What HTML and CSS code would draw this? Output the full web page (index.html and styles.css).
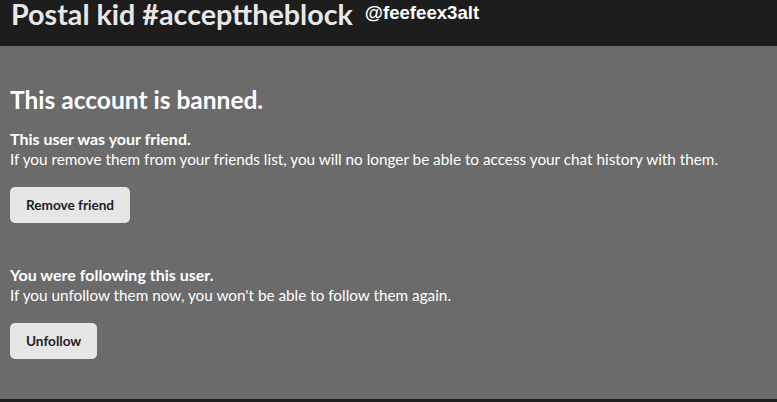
FILE: index.html
```html
<!DOCTYPE html>
<html>
<head>
<meta charset="utf-8">
<link rel="stylesheet" href="styles.css">
</head>
<body>
<header class="top">
  <h1 class="name">Postal kid #accepttheblock</h1>
  <span class="handle">@feefeex3alt</span>
</header>
<main class="content">
  <h2 class="banned">This account is banned.</h2>
  <section class="block">
    <h3 class="block-title">This user was your friend.</h3>
    <p class="block-text">If you remove them from your friends list, you will no longer be able to access your chat history with them.</p>
    <button class="btn">Remove friend</button>
  </section>
  <section class="block">
    <h3 class="block-title">You were following this user.</h3>
    <p class="block-text">If you unfollow them now, you won't be able to follow them again.</p>
    <button class="btn">Unfollow</button>
  </section>
</main>
<div class="bottom"></div>
</body>
</html>
```
FILE: styles.css
```css
html, body {
  margin: 0;
  padding: 0;
  height: 100%;
}
body {
  background: #1e1e1e;
  font-family: Lato, "Liberation Sans", sans-serif;
  color: #ffffff;
  display: flex;
  flex-direction: column;
  overflow: hidden;
}
.top {
  height: 46px;
  background: #1d1d1d;
  display: flex;
  align-items: flex-start;
  gap: 12px;
  padding: 0 11px;
  box-sizing: border-box;
}
.name {
  margin: 0;
  font-size: 28.7px;
  font-weight: 700;
  color: #e8e8e8;
  line-height: 1;
}
.handle {
  font-family: "Liberation Sans", Arial, sans-serif;
  font-weight: 700;
  font-size: 18.6px;
  color: #ffffff;
  line-height: 22px;
  margin-top: 2px;
}
.content {
  background: #6b6b6b;
  height: 353px;
  box-sizing: border-box;
  padding: 39px 10px 0;
}
.banned {
  margin: 0 0 14px;
  font-size: 24.5px;
  font-weight: 700;
  line-height: 30px;
}
.block {
  margin-bottom: 42px;
}
.block-title {
  margin: 0;
  font-size: 16px;
  font-weight: 700;
  line-height: 20px;
}
.block-text {
  margin: 0 0 18px;
  font-size: 15.3px;
  line-height: 20px;
}
.btn {
  display: block;
  border: none;
  background: #e6e6e6;
  color: #1e1e1e;
  font-family: Lato, "Liberation Sans", sans-serif;
  font-weight: 700;
  font-size: 13.6px;
  border-radius: 5px;
  height: 36px;
  padding: 0 16px;
}
.bottom {
  flex: 1;
  background: #1e1e1e;
}
```
